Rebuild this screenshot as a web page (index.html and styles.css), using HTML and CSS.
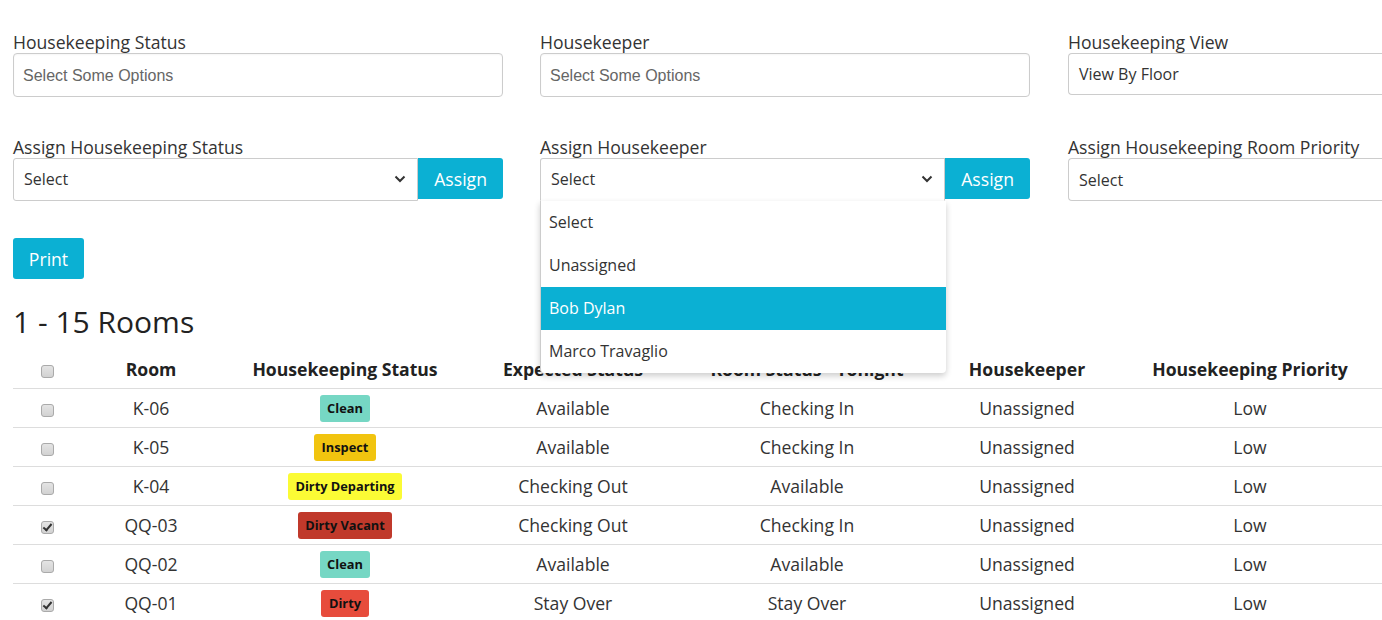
FILE: index.html
```html
<!DOCTYPE html>
<html lang="en">
<head>
<meta charset="utf-8">
<title>Housekeeping</title>
<link rel="stylesheet" href="styles.css">
</head>
<body>
<div class="page">
  <div class="filters">
    <div class="field">
      <label class="label">Housekeeping Status</label>
      <div class="multi"><span class="placeholder">Select Some Options</span></div>
    </div>
    <div class="field">
      <label class="label">Housekeeper</label>
      <div class="multi"><span class="placeholder">Select Some Options</span></div>
    </div>
    <div class="field">
      <label class="label">Housekeeping View</label>
      <div class="plain-select">View By Floor</div>
    </div>

    <div class="field">
      <label class="label">Assign Housekeeping Status</label>
      <div class="assign-group">
        <div class="select">
          <span>Select</span>
          <svg class="chev" width="12" height="8" viewBox="0 0 12 8"><path d="M1.5 1.5 L6 6 L10.5 1.5" fill="none" stroke="#333" stroke-width="2"/></svg>
        </div>
        <button class="btn assign">Assign</button>
      </div>
    </div>
    <div class="field">
      <label class="label">Assign Housekeeper</label>
      <div class="assign-group">
        <div class="select open">
          <span>Select</span>
          <svg class="chev" width="12" height="8" viewBox="0 0 12 8"><path d="M1.5 1.5 L6 6 L10.5 1.5" fill="none" stroke="#333" stroke-width="2"/></svg>
          <ul class="dropdown">
            <li>Select</li>
            <li>Unassigned</li>
            <li class="active">Bob Dylan</li>
            <li>Marco Travaglio</li>
          </ul>
        </div>
        <button class="btn assign">Assign</button>
      </div>
    </div>
    <div class="field">
      <label class="label">Assign Housekeeping Room Priority</label>
      <div class="plain-select tall">Select</div>
    </div>
  </div>

  <button class="btn print">Print</button>

  <h3 class="count">1 - 15 Rooms</h3>

  <table class="rooms">
    <colgroup>
      <col class="c1"><col class="c2"><col class="c3"><col class="c4"><col class="c5"><col class="c6"><col class="c7">
    </colgroup>
    <thead>
      <tr>
        <th><input type="checkbox" class="cb"></th>
        <th>Room</th>
        <th>Housekeeping Status</th>
        <th>Expected Status</th>
        <th>Room Status - Tonight</th>
        <th>Housekeeper</th>
        <th>Housekeeping Priority</th>
      </tr>
    </thead>
    <tbody>
      <tr>
        <td><input type="checkbox" class="cb"></td>
        <td>K-06</td>
        <td><span class="badge clean">Clean</span></td>
        <td>Available</td>
        <td>Checking In</td>
        <td>Unassigned</td>
        <td>Low</td>
      </tr>
      <tr>
        <td><input type="checkbox" class="cb"></td>
        <td>K-05</td>
        <td><span class="badge inspect">Inspect</span></td>
        <td>Available</td>
        <td>Checking In</td>
        <td>Unassigned</td>
        <td>Low</td>
      </tr>
      <tr>
        <td><input type="checkbox" class="cb"></td>
        <td>K-04</td>
        <td><span class="badge departing">Dirty Departing</span></td>
        <td>Checking Out</td>
        <td>Available</td>
        <td>Unassigned</td>
        <td>Low</td>
      </tr>
      <tr>
        <td><input type="checkbox" class="cb" checked></td>
        <td>QQ-03</td>
        <td><span class="badge vacant">Dirty Vacant</span></td>
        <td>Checking Out</td>
        <td>Checking In</td>
        <td>Unassigned</td>
        <td>Low</td>
      </tr>
      <tr>
        <td><input type="checkbox" class="cb"></td>
        <td>QQ-02</td>
        <td><span class="badge clean">Clean</span></td>
        <td>Available</td>
        <td>Available</td>
        <td>Unassigned</td>
        <td>Low</td>
      </tr>
      <tr>
        <td><input type="checkbox" class="cb" checked></td>
        <td>QQ-01</td>
        <td><span class="badge dirty">Dirty</span></td>
        <td>Stay Over</td>
        <td>Stay Over</td>
        <td>Unassigned</td>
        <td>Low</td>
      </tr>
    </tbody>
  </table>
</div>
</body>
</html>
```

FILE: styles.css
```css
* { box-sizing: border-box; }
html, body { margin: 0; padding: 0; overflow: hidden; background: #fff; }
body {
  font-family: "Open Sans", "Liberation Sans", sans-serif;
  color: #333;
  font-size: 17.6px;
}
.page {
  width: 1560px;
  padding: 31px 0 0 13px;
}
.filters {
  display: grid;
  grid-template-columns: 527px 528px 490px;
  row-gap: 39px;
  align-items: start;
}
.field { display: flex; flex-direction: column; width: 490px; }
.label {
  display: block;
  font-size: 17.6px;
  line-height: 22px;
  height: 22px;
  color: #333;
}
.multi {
  height: 44px;
  border: 1px solid #ccc;
  border-radius: 4px;
  background: #fff;
  display: flex;
  align-items: center;
  padding: 1px 9px 0;
  box-shadow: inset 0 1px 2px rgba(0,0,0,0.04);
}
.placeholder {
  font-family: "Liberation Sans", Arial, sans-serif;
  font-size: 16px;
  color: #666;
}
.plain-select {
  height: 42px;
  border: 1px solid #ccc;
  border-right: none;
  border-radius: 4px 0 0 4px;
  display: flex;
  align-items: center;
  padding: 0 10px;
  font-size: 16px;
  color: #333;
  width: 330px;
}
.plain-select.tall { height: 43px; }
.assign-group { display: flex; align-items: flex-start; }
.select {
  position: relative;
  width: 406px;
  height: 43px;
  border: 1px solid #ccc;
  border-radius: 3px 0 0 3px;
  background: #fff;
  display: flex;
  align-items: center;
  justify-content: space-between;
  padding: 0 11px 1px 10px;
  font-size: 16px;
  color: #333;
}
.select.open {
  border-bottom-color: transparent;
  border-radius: 3px 0 0 0;
}
.chev { display: block; }
.btn {
  font-family: "Open Sans", "Liberation Sans", sans-serif;
  font-size: 17.6px;
  color: #fff;
  background: #0bb0d3;
  border: none;
  cursor: pointer;
}
.assign {
  width: 85px;
  height: 41px;
  border-radius: 0 3px 3px 0;
  padding: 0;
}
.dropdown {
  position: absolute;
  top: 42px;
  left: -1px;
  width: 406px;
  margin: 0;
  padding: 0;
  list-style: none;
  background: #fff;
  border-left: 1px solid #ccc;
  border-radius: 0 0 4px 4px;
  box-shadow: 0 3px 6px rgba(0,0,0,0.2);
  z-index: 5;
}
.dropdown li {
  height: 43px;
  line-height: 43px;
  padding-left: 8px;
  font-size: 16px;
  color: #333;
}
.dropdown li.active { background: #0bb0d3; color: #fff; }
.print {
  display: block;
  margin-top: 37px;
  width: 71px;
  height: 41px;
  border-radius: 3px;
  padding: 0;
}
.count {
  margin: 25px 0 0 0;
  font-weight: 400;
  font-size: 30px;
  line-height: 36px;
  color: #222;
}
.rooms {
  margin-top: 9px;
  width: 1370px;
  border-collapse: collapse;
  table-layout: fixed;
}
.c1 { width: 68px; }
.c2 { width: 140px; }
.c3 { width: 248px; }
.c4 { width: 208px; }
.c5 { width: 260px; }
.c6 { width: 180px; }
.c7 { width: 266px; }
.rooms th, .rooms td {
  text-align: center;
  vertical-align: middle;
  padding: 2px 0 0;
  height: 39px;
  line-height: 25px;
  font-size: 17.6px;
  color: #333;
}
.rooms th { font-weight: 700; color: #222; }
.rooms thead tr { border-bottom: 1px solid #ddd; }
.rooms tbody tr { border-bottom: 1px solid #ddd; }
.cb {
  -webkit-appearance: none;
  appearance: none;
  width: 13px;
  height: 13px;
  margin: 0;
  border: 1px solid #aaa;
  border-radius: 3px;
  background: linear-gradient(#e4e4e4, #d2d2d2);
  vertical-align: middle;
  position: relative;
  display: inline-block;
}
.cb:checked::after {
  content: "";
  position: absolute;
  left: 3.5px;
  top: 0.5px;
  width: 3px;
  height: 7px;
  border: solid #333;
  border-width: 0 2px 2px 0;
  transform: rotate(40deg);
}
.badge {
  display: inline-block;
  font-size: 12.8px;
  font-weight: 700;
  line-height: 27px;
  height: 27px;
  padding: 0 7.5px;
  border-radius: 3px;
  color: #111;
  vertical-align: middle;
}
.clean { background: #76d7c4; }
.inspect { background: #f1c40f; }
.departing { background: #fbfb35; }
.vacant { background: #c0392b; }
.dirty { background: #e74c3c; }
```
